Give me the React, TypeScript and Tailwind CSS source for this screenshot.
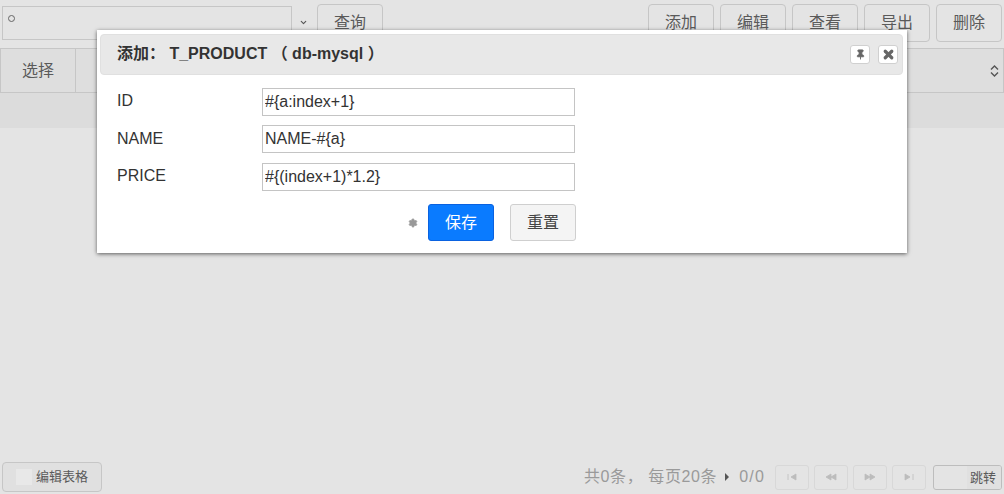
import React from 'react';
import { ChevronDown, Pin, X, Settings } from 'lucide-react';

const FONT = '"Liberation Sans", "Noto Sans CJK SC", sans-serif';

const TOOL_BUTTONS = ['添加', '编辑', '查看', '导出', '删除'];

const ToolButton: React.FC<{ label: string }> = ({ label }) => (
  <button className="w-[66px] h-[38px] border border-[#c6c6c6] rounded-[4px] bg-[#e4e4e4] text-[16px] text-[#5a5a5a]">
    {label}
  </button>
);

const PageButton: React.FC<{ children: React.ReactNode }> = ({ children }) => (
  <button className="w-[34px] h-[25px] border border-[#d8d8d8] rounded-[3px] flex items-center justify-center text-[#bcbcbc]">
    {children}
  </button>
);

// first / previous / next / last
const PagerIcon: React.FC<{ d: string }> = ({ d }) => (
  <svg width="12" height="8" viewBox="0 0 12 8" fill="currentColor" stroke="currentColor" strokeWidth="0.8">
    <path d={d} />
  </svg>
);

const Field: React.FC<{ label: string; value: string; className?: string; labelClass?: string }> = ({ label, value, className, labelClass }) => (
  <div className={`flex items-center ${className || ''}`}>
    <label className={`w-[145px] text-[16px] text-[#333] ${labelClass || '-mt-[3px]'}`}>{label}</label>
    <input
      readOnly
      value={value}
      className="w-[313px] h-[28px] border border-[#c4c4c4] pl-[2px] text-[16px] text-[#333] bg-white outline-none"
    />
  </div>
);

const App: React.FC = () => {
  return (
    <div className="relative w-[1004px] h-[494px] overflow-hidden bg-[#e4e4e4] flex flex-col" style={{ fontFamily: FONT }}>
      <div className="flex items-center h-[48px] pb-[3px] pl-[2px] pr-[2px]">
        <div className="w-[290px] h-[34px] border border-[#c6c6c6] relative">
          <span className="absolute left-[5px] top-[8px] w-[7px] h-[7px] rounded-full border border-[#666]" />
        </div>
        <ChevronDown className="w-[9px] h-[9px] text-[#555] ml-[7px] mr-[9px]" strokeWidth={3} />
        <ToolButton label="查询" />
        <div className="flex gap-[6px] ml-auto">
          {TOOL_BUTTONS.map(label => (
            <ToolButton key={label} label={label} />
          ))}
        </div>
      </div>

      <div className="h-[45px] border-y border-[#c6c6c6] bg-[#dedede] flex items-center border-r">
        <div className="w-[76px] h-full border-r border-l border-[#c6c6c6] flex items-center justify-center text-[16px] text-[#5a5a5a]">
          选择
        </div>
        <svg className="ml-auto mr-[4px]" width="9" height="12" viewBox="0 0 9 12" fill="none" stroke="#555" strokeWidth="1.4">
          <path d="M1 4.5 L4.5 1 L8 4.5 M1 7.5 L4.5 11 L8 7.5" />
        </svg>
      </div>
      <div className="h-[35px] bg-[#dcdcdc]" />

      <div className="flex-1" />

      <div className="flex items-center h-[32px] pb-[2px] pl-[2px] pr-[2px]">
        <button className="w-[100px] h-[30px] border border-[#c6c6c6] rounded-[4px] bg-[#e0e0e0] flex items-center text-[13px] text-[#5a5a5a] pl-[13px]">
          <span className="w-[16px] h-[16px] bg-[#e8e8e8] mr-[4px]" />
          编辑表格
        </button>
        <div className="ml-auto flex items-center text-[16px] text-[#9a9a9a]">
          <span className="tracking-[0.6px]">共0条， 每页20条</span>
          <span className="ml-[8px] mr-[10px] w-0 h-0 border-y-[4px] border-y-transparent border-l-[4px] border-l-[#555]" />
          <span className="tracking-[1.2px]">0/0</span>
          <div className="flex gap-[5px] ml-[10px]">
            <PageButton><PagerIcon d="M2 1 V7 M10 1 L5 4 L10 7 Z" /></PageButton>
            <PageButton><PagerIcon d="M6 1 L1 4 L6 7 Z M11 1 L6 4 L11 7 Z" /></PageButton>
            <PageButton><PagerIcon d="M1 1 L6 4 L1 7 Z M6 1 L11 4 L6 7 Z" /></PageButton>
            <PageButton><PagerIcon d="M2 1 L7 4 L2 7 Z M10 1 V7" /></PageButton>
          </div>
          <div className="w-[69px] h-[25px] ml-[7px] border border-[#bdbdbd] rounded-[3px] flex justify-end overflow-hidden">
            <span className="w-[34px] pl-[3px] bg-[#e0e0e0] text-[13px] text-[#5a5a5a] leading-[24px]">跳转</span>
          </div>
        </div>
      </div>

      {/* dialog sits over the page */}
      <div className="absolute left-[97px] top-[30px] w-[810px] h-[223px] bg-white shadow-[0_1px_4px_rgba(0,0,0,0.6)] pl-[3px] pr-[4px] pt-[4px]">
        <div className="h-[41px] bg-[#e8e8e8] border border-[#e0e0e0] rounded-[4px] flex items-center pl-[16px] pr-[4px] text-[16px] font-bold text-[#333]">
          <span className="-mt-[2px]">添加： T_PRODUCT （ db-mysql ）</span>
          <button className="ml-auto w-[20px] h-[19px] bg-white border border-[#d0d0d0] rounded-[3px] flex items-center justify-center">
            <Pin className="w-[11px] h-[11px] text-[#666]" fill="currentColor" />
          </button>
          <button className="ml-[8px] w-[20px] h-[19px] bg-white border border-[#d0d0d0] rounded-[3px] flex items-center justify-center">
            <X className="w-[13px] h-[13px] text-[#666]" strokeWidth={6} />
          </button>
        </div>
        <div className="pl-[17px]">
          <Field label="ID" value="#{a:index+1}" className="mt-[13px]" />
          <Field label="NAME" value="NAME-#{a}" className="mt-[9px]" labelClass="-mt-[1px]" />
          <Field label="PRICE" value="#{(index+1)*1.2}" className="mt-[10px]" />
          <div className="flex items-center mt-[13px] w-[459px] justify-end">
            <Settings className="w-[10px] h-[10px] text-[#999] mr-[10px]" fill="currentColor" />
            <button className="w-[66px] h-[37px] rounded-[3px] bg-[#0a7bff] border border-[#0a62e0] text-white text-[16px]">保存</button>
            <button className="w-[66px] h-[37px] rounded-[3px] bg-[#f4f4f4] border border-[#cfcfcf] text-[#444] text-[16px] ml-[16px]">重置</button>
          </div>
        </div>
      </div>
    </div>
  );
};

export default App;
